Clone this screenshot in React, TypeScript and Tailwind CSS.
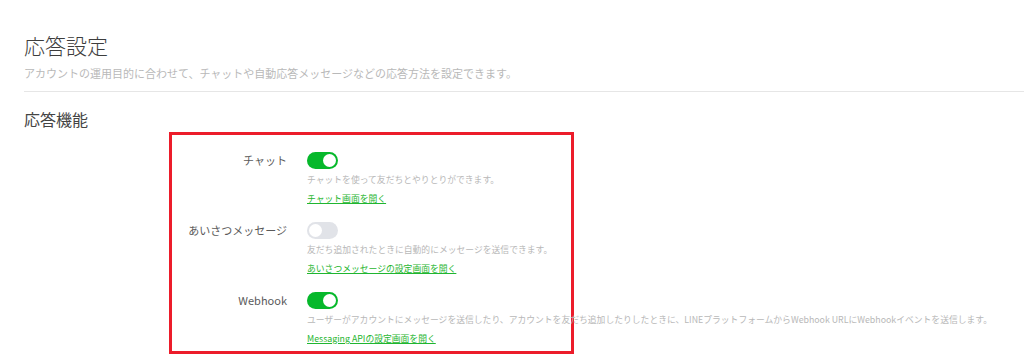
import { useState } from "react";

type Feature = {
    label: string;
    on: boolean;
    description: string;
    link: string;
};

const features: Feature[] = [
    {
        label: "チャット",
        on: true,
        description: "チャットを使って友だちとやりとりができます。",
        link: "チャット画面を開く",
    },
    {
        label: "あいさつメッセージ",
        on: false,
        description: "友だち追加されたときに自動的にメッセージを送信できます。",
        link: "あいさつメッセージの設定画面を開く",
    },
    {
        label: "Webhook",
        on: true,
        description:
            "ユーザーがアカウントにメッセージを送信したり、アカウントを友だち追加したりしたときに、LINEプラットフォームからWebhook URLにWebhookイベントを送信します。",
        link: "Messaging APIの設定画面を開く",
    },
];

function Toggle({ initial }: { initial: boolean }) {
    const [on, setOn] = useState(initial);
    return (
        <button
            onClick={() => setOn(!on)}
            className={`relative h-[17px] w-[31px] rounded-full ${on ? "bg-[#06b82b]" : "bg-[#e1e3e8]"}`}
        >
            <span
                className={`absolute top-[2px] h-[13px] w-[13px] rounded-full bg-white ${on ? "left-[16px]" : "left-[2px]"}`}
            />
        </button>
    );
}

export default function App() {
    return (
        <div className="min-h-[360px] bg-white pl-[24px] pt-[31px] font-['Noto_Sans_CJK_JP','Noto_Sans',sans-serif]">
            <h1 className="text-[21px] font-light leading-[28px] text-[#3d3d3d]">応答設定</h1>
            <p className="mt-[6px] text-[11px] leading-[16px] text-[#b9b9b9]">
                アカウントの運用目的に合わせて、チャットや自動応答メッセージなどの応答方法を設定できます。
            </p>
            <div className="mt-[10px] h-px bg-[#e6e6e6]" />

            <h2 className="mt-[15px] text-[16px] leading-[24px] text-[#444444]">応答機能</h2>

            <div className="ml-[145px] mt-[1px] h-[222px] w-[405px] border-[3px] border-[#ec1c2a] pt-[17px]">
                {features.map((f) => (
                    <div key={f.label} className="mb-[16px] flex gap-[20px]">
                        <div className="w-[115px] shrink-0 text-right text-[11px] leading-[17px] text-[#5a5a5a]">
                            {f.label}
                        </div>
                        <div className="flex flex-col items-start">
                            <Toggle initial={f.on} />
                            <p className="mt-[4px] whitespace-nowrap text-[8.8px] leading-[14px] text-[#b8b8b8]">
                                {f.description}
                            </p>
                            <a
                                href="#"
                                className="mt-[5px] whitespace-nowrap text-[8.8px] leading-[14px] text-[#1fb630] underline"
                            >
                                {f.link}
                            </a>
                        </div>
                    </div>
                ))}
            </div>
        </div>
    );
}
